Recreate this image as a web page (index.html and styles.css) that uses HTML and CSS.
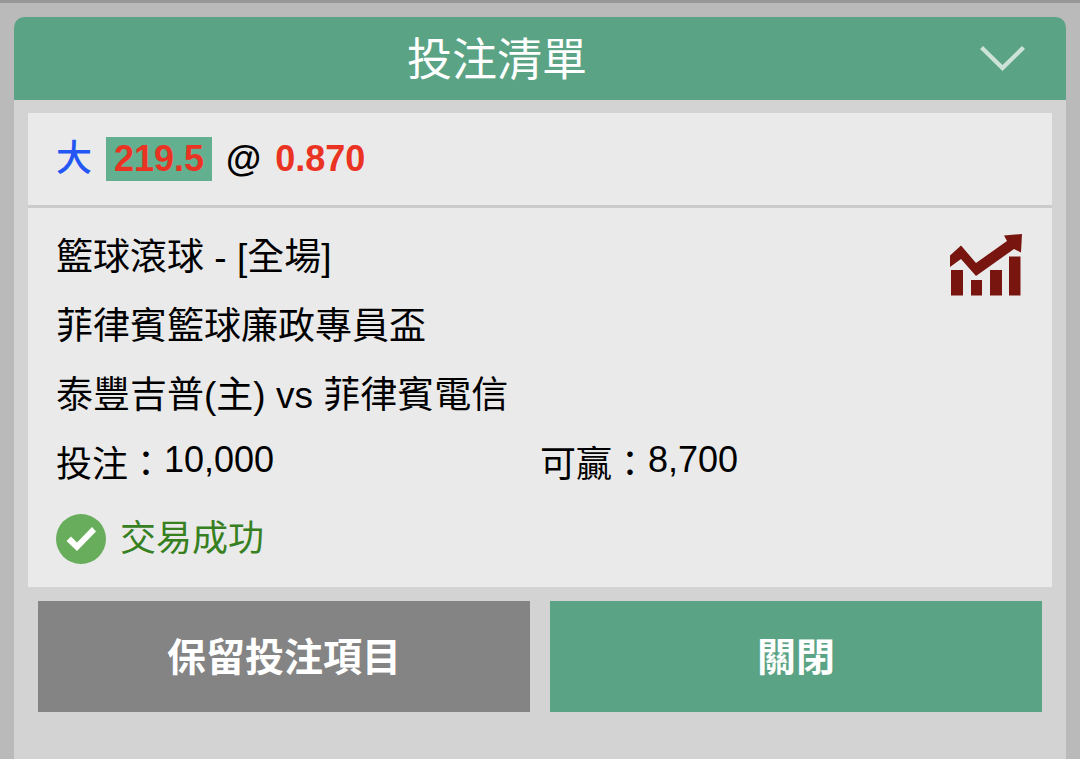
FILE: index.html
```html
<!DOCTYPE html>
<html lang="zh-Hant">

<head>
    <meta charset="UTF-8">
    <meta name="viewport" content="width=device-width, initial-scale=1.0">
    <title>投注清單</title>
    <link rel="stylesheet" href="styles.css">
</head>

<body>
    <div class="betslip">
        <header class="header">
            <h1>投注清單</h1>
            <button type="button" class="toggle" aria-label="收合">
                <svg width="45" height="25" viewBox="0 0 45 25">
                    <path d="M0 3 L3 0 L22.5 19 L42 0 L45 3 L22.5 25 Z" fill="currentColor" />
                </svg>
            </button>
        </header>

        <main class="content">
            <section class="ticket">
                <div class="pick">
                    <span class="side">大</span>
                    <span class="line">219.5</span>
                    <span class="at">@</span>
                    <span class="odds">0.870</span>
                </div>
                <div class="detail">
                    <svg class="chart" width="72" height="62" viewBox="0 0 72 62">
                        <path d="M0 21.5 L11 11.5 L26 29 L57 7 L54 1.5 L72 0 L71 18.5 L64 15 L26 42 L11 25 L0 33 Z" />
                        <path d="M1 36h12v25.500H1zM21 46h11v15.500H21zM40 36h12v25.500H40zM59 22.500h11.500v39H59z" />
                    </svg>
                    <p>籃球滾球 - [全場]</p>
                    <p>菲律賓籃球廉政專員盃</p>
                    <p>泰豐吉普(主) vs 菲律賓電信</p>
                    <div class="amounts">
                        <div class="amount"><span>投注：</span><span class="num">10,000</span></div>
                        <div class="amount"><span>可贏：</span><span class="num">8,700</span></div>
                    </div>
                    <div class="status">
                        <svg width="50" height="50" viewBox="0 0 50 50">
                            <circle cx="25" cy="25" r="25" fill="#67ad5b" />
                            <path d="M10.500 27 L15 22.500 L21 28.500 L36 13 L40 17.500 L21 37 Z" fill="#fff" />
                        </svg>
                        <span>交易成功</span>
                    </div>
                </div>
            </section>

            <div class="actions">
                <button type="button" class="btn keep">保留投注項目</button>
                <button type="button" class="btn close">關閉</button>
            </div>
        </main>
    </div>
</body>

</html>
```
FILE: styles.css
```css
* {
    margin: 0;
    padding: 0;
    box-sizing: border-box;
}

body {
    background-color: #bababa;
    border-top: 3px solid #979797;
    font-family: "Liberation Sans", "Noto Sans CJK TC", sans-serif;
    font-size: 36px;
    color: #000;
}

.betslip {
    display: flex;
    flex-direction: column;
    min-height: calc(100vh - 17px);
    margin: 14px 14px 0;
    border-radius: 10px 10px 0 0;
    background-color: #d3d3d3;
    overflow: hidden;
}

.header {
    display: flex;
    align-items: center;
    height: 83px;
    padding-right: 41px;
    background-color: #5ba385;
    color: #fff;
}

.header h1 {
    flex: 1;
    padding-bottom: 4px;
    text-align: center;
    font-size: 45px;
    font-weight: 400;
}

.toggle {
    display: flex;
    border: none;
    background: none;
    color: #cde3da;
    cursor: pointer;
}

.content {
    padding: 13px 14px;
}

.ticket {
    background-color: #eaeaea;
}

.pick {
    display: flex;
    align-items: center;
    height: 95px;
    padding: 0 28px;
    border-bottom: 3px solid #cbcbcb;
    font-weight: 700;
}

.side {
    margin-right: 14px;
    color: #2456f5;
    font-weight: 500;
    line-height: 44px;
}

.line {
    padding: 0 8px;
    background-color: #62b08f;
    color: #ea3323;
    line-height: 44px;
}

.at {
    margin: 0 14px;
}

.odds {
    color: #ea3323;
}

.detail {
    position: relative;
    padding: 15px 28px 23px;
    line-height: 69px;
}

.detail p {
    font-size: 37px;
}

.chart {
    position: absolute;
    top: 26px;
    right: 30px;
    fill: #78150f;
}

.amounts {
    display: grid;
    grid-template-columns: 1fr 1fr;
}

.amount {
    display: flex;
}

.num {
    line-height: 60px;
}

.status {
    display: flex;
    align-items: center;
    gap: 14px;
    margin-top: 15px;
    color: #37801f;
    line-height: 50px;
}

.actions {
    display: grid;
    grid-template-columns: 1fr 1fr;
    gap: 20px;
    padding: 14px 10px;
}

.btn {
    height: 111px;
    padding-bottom: 6px;
    border: none;
    color: #fff;
    font: inherit;
    font-size: 39px;
    font-weight: 700;
    cursor: pointer;
}

.keep {
    background-color: #848484;
}

.close {
    background-color: #5ba385;
}
```
